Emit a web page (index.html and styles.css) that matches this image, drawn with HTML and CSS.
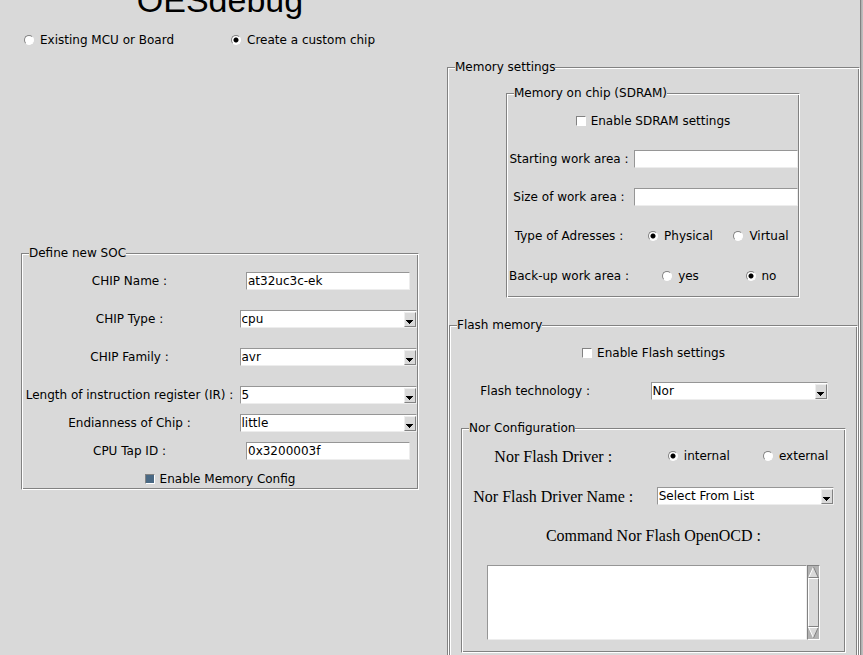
FILE: index.html
```html
<!DOCTYPE html>
<html lang="en">
<head>
<meta charset="utf-8">
<title>OESdebug</title>
<link rel="stylesheet" href="styles.css">
</head>
<body>
<svg class="defs" aria-hidden="true">
  <symbol id="arrow" viewBox="0 0 10 13"><path d="M1 7h7v1H7v1H6v1H5v1H4v-1H3V9H2V8H1z" fill="#000" shape-rendering="crispEdges"/></symbol>
</svg>
<div class="window">
  <main class="app">
    <header class="top">
      <h1 class="title">OESdebug</h1>
      <div class="modes">
        <label class="choice"><input type="radio" name="mode">Existing MCU or Board</label>
        <label class="choice"><input type="radio" name="mode" checked>Create a custom chip</label>
      </div>
    </header>

    <fieldset class="frame soc">
      <legend>Define new SOC</legend>
      <div class="stack">
        <div class="row"><label for="name">CHIP Name :</label><input class="text" id="name" type="text" value="at32uc3c-ek"></div>
        <div class="row"><label for="type">CHIP Type :</label><span class="combo"><select id="type"><option>cpu</option></select><svg class="drop"><use href="#arrow"/></svg></span></div>
        <div class="row"><label for="family">CHIP Family :</label><span class="combo"><select id="family"><option>avr</option></select><svg class="drop"><use href="#arrow"/></svg></span></div>
        <div class="row"><label for="ir">Length of instruction register (IR) :</label><span class="combo"><select id="ir"><option>5</option></select><svg class="drop"><use href="#arrow"/></svg></span></div>
      </div>
      <div class="stack tight">
        <div class="row"><label for="endian">Endianness of Chip :</label><span class="combo"><select id="endian"><option>little</option></select><svg class="drop"><use href="#arrow"/></svg></span></div>
        <div class="row"><label for="tap">CPU Tap ID :</label><input class="text" id="tap" type="text" value="0x3200003f"></div>
        <label class="choice centered"><input type="checkbox" checked>Enable Memory Config</label>
      </div>
    </fieldset>

    <fieldset class="frame memory">
      <legend>Memory settings</legend>
      <fieldset class="frame sdram">
        <legend>Memory on chip (SDRAM)</legend>
        <div class="stack">
          <label class="choice centered"><input type="checkbox">Enable SDRAM settings</label>
          <div class="row"><label for="start">Starting work area :</label><input class="text" id="start" type="text"></div>
          <div class="row"><label for="size">Size of work area :</label><input class="text" id="size" type="text"></div>
          <div class="row options-row"><span>Type of Adresses :</span>
            <div class="options">
              <label class="choice"><input type="radio" name="addr" checked>Physical</label>
              <label class="choice"><input type="radio" name="addr">Virtual</label>
            </div>
          </div>
          <div class="row options-row"><span>Back-up work area :</span>
            <div class="options">
              <label class="choice"><input type="radio" name="backup">yes</label>
              <label class="choice"><input type="radio" name="backup" checked>no</label>
            </div>
          </div>
        </div>
      </fieldset>

      <fieldset class="frame flash">
        <legend>Flash memory</legend>
        <div class="stack">
          <label class="choice centered"><input type="checkbox">Enable Flash settings</label>
          <div class="row"><label for="tech">Flash technology :</label><span class="combo"><select id="tech"><option>Nor</option></select><svg class="drop"><use href="#arrow"/></svg></span></div>
          <fieldset class="frame nor">
            <legend>Nor Configuration</legend>
            <div class="stack">
              <div class="row options-row"><span class="serif">Nor Flash Driver :</span>
                <div class="options">
                  <label class="choice"><input type="radio" name="driver" checked>internal</label>
                  <label class="choice"><input type="radio" name="driver">external</label>
                </div>
              </div>
              <div class="row options-row"><label class="serif" for="driver-name">Nor Flash Driver Name :</label><span class="combo"><select id="driver-name"><option>Select From List</option></select><svg class="drop"><use href="#arrow"/></svg></span></div>
              <label class="serif command" for="command">Command Nor Flash OpenOCD :</label>
              <div class="editor">
                <textarea id="command"></textarea>
                <div class="scrollbar">
                  <button type="button" aria-label="Scroll up"><svg viewBox="0 0 11 12"><path d="M5.500 1L1 11h9z" fill="#d9d9d9"/><path d="M5.500 1L1 11" stroke="#fff" fill="none"/><path d="M5.500 1L10 11M1 11.500h10" stroke="#828282" fill="none"/></svg></button>
                  <div class="thumb"></div>
                  <button type="button" aria-label="Scroll down"><svg viewBox="0 0 11 12"><path d="M1 1h9L5.500 11z" fill="#d9d9d9"/><path d="M0 .5h10M1 1l4.500 10" stroke="#fff" fill="none"/><path d="M10 1L5.500 11" stroke="#828282" fill="none"/></svg></button>
                </div>
              </div>
            </div>
          </fieldset>
        </div>
      </fieldset>
    </fieldset>
  </main>
  <div class="edge"></div>
</div>
</body>
</html>
```

FILE: styles.css
```css
* { box-sizing: border-box; }

html, body { height: 100%; }

body {
  margin: 0;
  overflow: hidden;
  background: #d9d9d9;
  color: #000;
  font: 12px/16px "DejaVu Sans", sans-serif;
}

.defs { display: none; }

.window {
  display: flex;
  min-height: 100%;
}

.app {
  flex: 1;
  display: grid;
  grid-template-columns: 398fr 413fr;
  grid-template-rows: auto 1fr;
  column-gap: 28px;
  padding-left: 21px;
}

.edge {
  width: 3px;
  border-left: 1px solid #828282;
  background: linear-gradient(to right, #aaa, #c4c4c4);
}

.top { grid-column: 1 / -1; }

.title {
  width: 398px;
  margin: -20px 0 0;
  font: 34px/40px "Liberation Sans", sans-serif;
  text-align: center;
}

.modes {
  display: flex;
  gap: 57px;
  padding: 12px 3px 11px;
}

.frame {
  min-width: 0;
  margin: 0;
  padding: 11px 1px;
  border: 1px solid;
  border-color: #828282 #fff #fff #828282;
  box-shadow: inset 1px 1px #fff, inset -1px -1px #828282;
}

.frame > legend {
  margin-left: 6px;
  padding: 0;
  background: #d9d9d9;
}

.soc {
  align-self: start;
  margin-top: 186px;
  padding-bottom: 1px;
}

.memory { padding-top: 10px; }

.sdram { margin: 0 58px 19px 57px; }

.nor {
  margin: 0 10px;
  padding: 10px 1px 12px;
}

.stack {
  display: flex;
  flex-direction: column;
  gap: 20px;
}

.tight {
  gap: 10px;
  padding-top: 10px;
}

.row {
  display: grid;
  grid-template-columns: 213fr 178fr;
  column-gap: 3px;
  align-items: center;
  justify-items: center;
  height: 18px;
  white-space: nowrap;
}

.sdram .row {
  grid-template-columns: 1fr 164px;
  column-gap: 4px;
}

.flash .row { grid-template-columns: 169fr 235fr; }

.nor .row { grid-template-columns: 180fr 197fr; }

.row.options-row { height: 20px; }

.options {
  display: grid;
  grid-template-columns: 1fr 1fr;
  justify-items: center;
  width: 100%;
  padding-left: 4px;
}

.sdram .options {
  grid-template-columns: 93fr 68fr;
  padding: 0 3px 0 0;
}

.choice {
  display: flex;
  align-items: center;
  gap: 6px;
}

.centered {
  justify-content: center;
  gap: 5px;
  height: 18px;
}

input[type="radio"],
input[type="checkbox"] {
  appearance: none;
  width: 10px;
  height: 10px;
  margin: 0;
  border: 1px solid;
  border-color: #828282 #fff #fff #828282;
  background: #fff;
}

input[type="radio"] { border-radius: 50%; }

input[type="radio"]:checked { background: radial-gradient(circle, #000 2px, #fff 3px); }

input[type="checkbox"]:checked { background: #4a6984; }

.text,
.combo select,
.editor textarea {
  border: 1px solid;
  border-color: #969696 #ededed #ededed #969696;
  border-radius: 0;
  background: #fff;
  color: #000;
  font: inherit;
  outline: 0;
}

.text {
  width: 164px;
  height: 18px;
  padding: 0 1px;
}

.combo {
  position: relative;
  display: block;
  width: 177px;
  height: 18px;
}

.combo select {
  appearance: none;
  display: block;
  width: 100%;
  height: 18px;
  padding: 0 1px;
}

.drop {
  position: absolute;
  top: 2px;
  right: 1px;
  width: 12px;
  height: 15px;
  border: 1px solid;
  border-color: #eee #828282 #828282 #eee;
  background: #d9d9d9;
  pointer-events: none;
}

.serif { font: 16px/19px "Liberation Serif", serif; }

.command { text-align: center; }

.editor {
  display: flex;
  margin: 0 24px;
}

.editor textarea {
  flex: 1;
  min-width: 0;
  height: 75px;
  resize: none;
}

.scrollbar {
  display: flex;
  flex-direction: column;
  width: 13px;
  border: 1px solid;
  border-color: #828282 #fff #fff #828282;
  background: #b3b3b3;
}

.scrollbar button {
  display: block;
  height: 12px;
  padding: 0;
  border: 0;
  background: none;
}

.scrollbar svg {
  display: block;
  width: 11px;
  height: 12px;
}

.thumb {
  flex: 1;
  border: 1px solid;
  border-color: #fff #828282 #828282 #fff;
  background: #d9d9d9;
}
```
